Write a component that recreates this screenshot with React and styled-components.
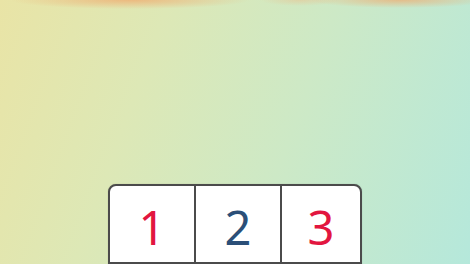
import React from "react";
import styled, { createGlobalStyle } from "styled-components";

const Global = createGlobalStyle`
  html, body { margin: 0; padding: 0; }
  body { width: 470px; height: 264px; overflow: hidden; font-family: "Noto Sans", "Open Sans", sans-serif; }
`;

const Page = styled.div`
  position: relative;
  width: 470px;
  height: 264px;
  overflow: hidden;
  display: flex;
  flex-direction: column;
  align-items: center;
  padding-top: 184px;
  box-sizing: border-box;
  background:
    radial-gradient(ellipse 120px 9px at 130px 0px, rgba(240, 170, 110, 0.75), rgba(240, 170, 110, 0) 100%),
    radial-gradient(ellipse 90px 8px at 400px 0px, rgba(240, 170, 110, 0.7), rgba(240, 170, 110, 0) 100%),
    radial-gradient(ellipse 40px 6px at 300px 0px, rgba(235, 190, 140, 0.5), rgba(235, 190, 140, 0) 100%),
    linear-gradient(110deg, #e9e4a6 0%, #dde8b6 30%, #cde9c6 60%, #b5e8db 100%);
`;

const Board = styled.div`
  display: grid;
  grid-template-columns: 84px 86px 1fr;
  width: 254px;
  height: 80px;
  box-sizing: border-box;
  background: #ffffff;
  border: 2px solid #4b4b4b;
  border-radius: 8px 8px 0 0;
  box-shadow: 0 0 1px rgba(0, 0, 0, 0.3);
  overflow: hidden;
`;

const Cell = styled.div`
  display: flex;
  align-items: center;
  justify-content: center;
  padding-top: 6px;
  border-left: ${(p) => (p.$first ? "none" : "2px solid #4b4b4b")};
  font-family: "Noto Sans", "Open Sans", sans-serif;
  font-size: 47px;
  font-weight: 400;
  line-height: 1;
  color: ${(p) => p.$color};
`;

const digits = [
  { n: "1", color: "#e2163f" },
  { n: "2", color: "#2b4f78" },
  { n: "3", color: "#e2163f" },
];

export default function App() {
  return (
    <>
      <Global />
      <Page>
        <Board>
          {digits.map((d, i) => (
            <Cell key={d.n} $first={i === 0} $color={d.color}>
              {d.n}
            </Cell>
          ))}
        </Board>
      </Page>
    </>
  );
}
